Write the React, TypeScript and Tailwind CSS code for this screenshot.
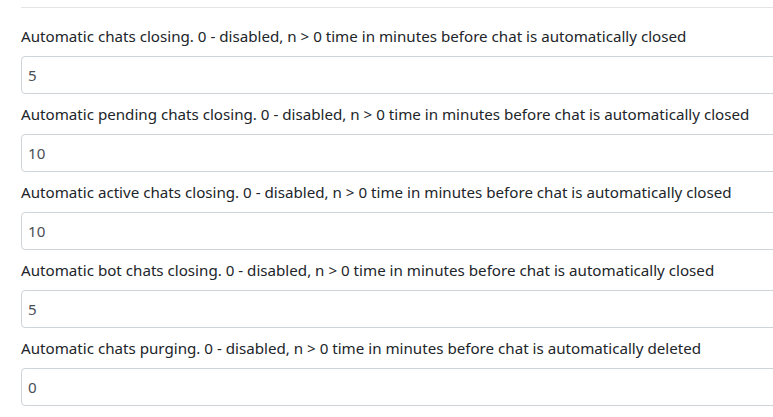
const fields = [
  {
    label:
      "Automatic chats closing. 0 - disabled, n > 0 time in minutes before chat is automatically closed",
    value: "5",
  },
  {
    label:
      "Automatic pending chats closing. 0 - disabled, n > 0 time in minutes before chat is automatically closed",
    value: "10",
  },
  {
    label:
      "Automatic active chats closing. 0 - disabled, n > 0 time in minutes before chat is automatically closed",
    value: "10",
  },
  {
    label:
      "Automatic bot chats closing. 0 - disabled, n > 0 time in minutes before chat is automatically closed",
    value: "5",
  },
  {
    label:
      "Automatic chats purging. 0 - disabled, n > 0 time in minutes before chat is automatically deleted",
    value: "0",
  },
];

export default function App() {
  return (
    <div className="w-[773px] h-[417px] overflow-hidden bg-white font-['Noto_Sans',sans-serif] text-[#212529]">
      <div className="w-[800px] pl-[21px] pt-[7px]">
        <div className="h-px bg-[#e5e5e5] mb-4" />
        {fields.map((f) => (
          <div key={f.label} className="mb-2">
            <label className="block text-[15.15px] leading-6 mb-2 whitespace-nowrap">
              {f.label}
            </label>
            <input
              type="text"
              defaultValue={f.value}
              className="block w-full h-[38px] px-[6px] text-[15.15px] text-[#495057] border border-[#ced4da] rounded-[4px] outline-none"
            />
          </div>
        ))}
      </div>
    </div>
  );
}
